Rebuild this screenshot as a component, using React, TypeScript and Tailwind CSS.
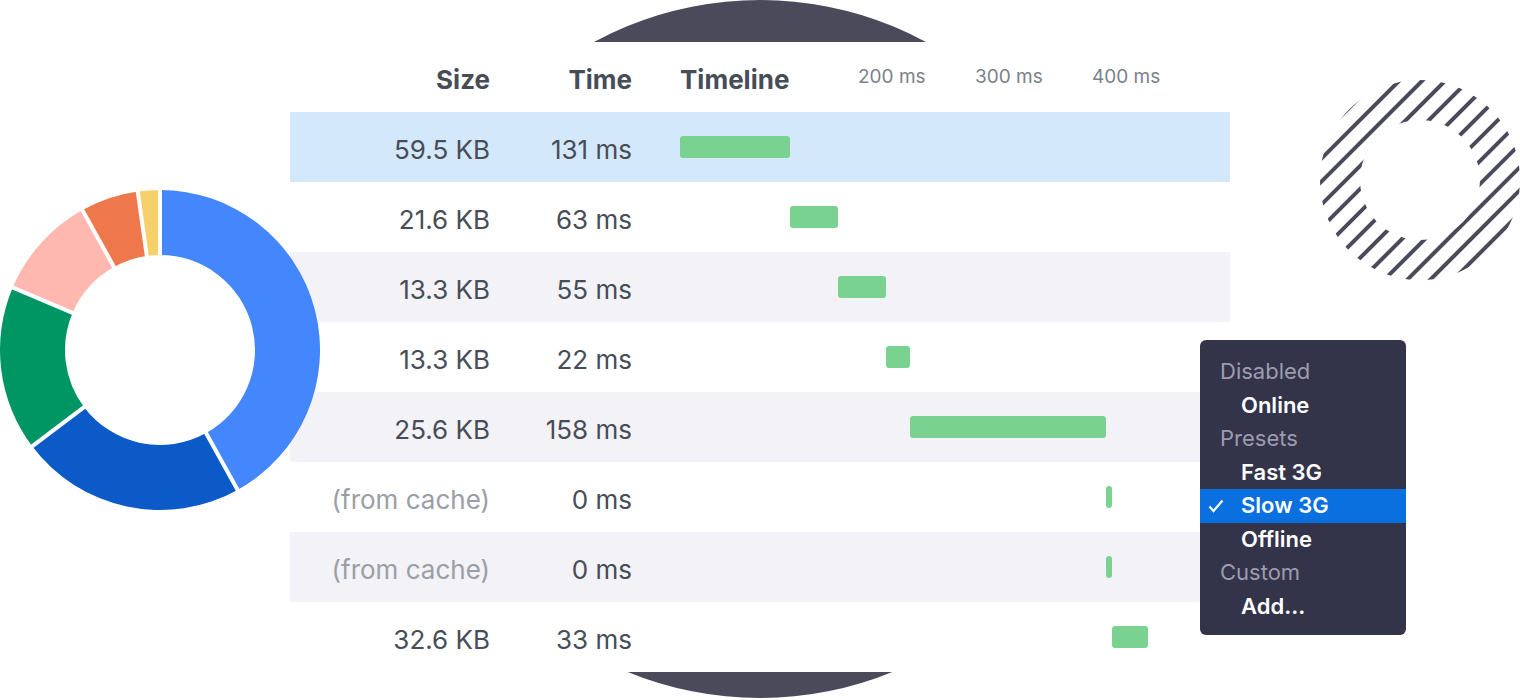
import React from 'react';

const font = { fontFamily: 'Inter, "Noto Sans", sans-serif' };

type Row = { size: string; time: string; left: number; width: number; cached?: boolean };

const rows: Row[] = [
  { size: '59.5 KB', time: '131 ms', left: 0, width: 110 },
  { size: '21.6 KB', time: '63 ms', left: 110, width: 48 },
  { size: '13.3 KB', time: '55 ms', left: 158, width: 48 },
  { size: '13.3 KB', time: '22 ms', left: 206, width: 24 },
  { size: '25.6 KB', time: '158 ms', left: 230, width: 196 },
  { size: '(from cache)', time: '0 ms', left: 426, width: 6, cached: true },
  { size: '(from cache)', time: '0 ms', left: 426, width: 6, cached: true },
  { size: '32.6 KB', time: '33 ms', left: 432, width: 36 },
];

const rowBg = (i: number) => {
  if (i === 0) return 'bg-[#d4e8fb]';
  return i % 2 === 0 ? 'bg-[#f2f2f7]' : 'bg-white';
};

// donut segments, degrees clockwise from 12 o'clock
const segments = [
  { from: 0, to: 151, color: '#4486fb' },
  { from: 151, to: 233, color: '#0b5ac8' },
  { from: 233, to: 293, color: '#009663' },
  { from: 293, to: 331, color: '#ffb8b0' },
  { from: 331, to: 352, color: '#ee784c' },
  { from: 352, to: 360, color: '#f6d06b' },
];

function pt(cx: number, cy: number, r: number, deg: number) {
  const a = ((deg - 90) * Math.PI) / 180;
  return [cx + r * Math.cos(a), cy + r * Math.sin(a)];
}

function Donut() {
  const c = 160;
  const R = 160;
  const r = 95;
  return (
    <svg width="320" height="320" viewBox="0 0 320 320">
      {segments.map((s) => {
        const [x1, y1] = pt(c, c, R, s.from);
        const [x2, y2] = pt(c, c, R, s.to);
        const [x3, y3] = pt(c, c, r, s.to);
        const [x4, y4] = pt(c, c, r, s.from);
        const large = s.to - s.from > 180 ? 1 : 0;
        const d = `M${x1} ${y1} A${R} ${R} 0 ${large} 1 ${x2} ${y2} L${x3} ${y3} A${r} ${r} 0 ${large} 0 ${x4} ${y4} Z`;
        return <path key={s.from} d={d} fill={s.color} />;
      })}
      {segments.map((s) => {
        const [x1, y1] = pt(c, c, r - 2, s.from);
        const [x2, y2] = pt(c, c, R + 1, s.from);
        return <line key={'g' + s.from} x1={x1} y1={y1} x2={x2} y2={y2} stroke="#fff" strokeWidth="4" />;
      })}
    </svg>
  );
}

function StripedRing() {
  const lines = [];
  for (let k = -14; k <= 4; k++) {
    const c = 310 + k * 23;
    lines.push(<line key={k} x1={c - 220} y1={220} x2={c + 20} y2={-20} stroke="#4b4a5a" strokeWidth="4" />);
  }
  return (
    <svg width="200" height="200" viewBox="0 0 200 200">
      <defs>
        <clipPath id="ring">
          <path
            clipRule="evenodd"
            d="M100 0 A100 100 0 1 1 99.99 0 Z M100 40 A60 60 0 1 0 100.01 40 Z"
          />
        </clipPath>
      </defs>
      <g clipPath="url(#ring)">{lines}</g>
    </svg>
  );
}

function ThrottleMenu() {
  const group = 'h-[33.5px] flex items-center pl-[20px] text-[22px] text-[#9c9cad]';
  const item = 'h-[33.5px] flex items-center pl-[41px] text-[22px] font-semibold text-white';
  return (
    <div className="absolute left-[1200px] top-[340px] z-20 w-[206px] rounded-md bg-[#33334a] pt-[15px] pb-[12px]" style={font}>
      <div className={group}>Disabled</div>
      <div className={item}>Online</div>
      <div className={group}>Presets</div>
      <div className={item}>Fast 3G</div>
      <div className="h-[33.5px] flex items-center pl-[8px] bg-[#0a6fdf] text-[22px] font-semibold text-white">
        <svg width="16" height="14" viewBox="0 0 16 14" className="mr-[17px]">
          <polyline points="1.5,7.5 5.5,12 14.5,1.5" fill="none" stroke="#fff" strokeWidth="2.2" />
        </svg>
        Slow 3G
      </div>
      <div className={item}>Offline</div>
      <div className={group}>Custom</div>
      <div className={item}>Add...</div>
    </div>
  );
}

export default function App() {
  return (
    <div className="relative w-[1520px] h-[700px] overflow-hidden bg-white" style={font}>
      {/* big backdrop circle */}
      <div className="absolute left-[411px] top-0 w-[698px] h-[698px] rounded-full bg-[#4b4a5a]" />

      <div className="absolute left-0 top-[190px] z-20">
        <Donut />
      </div>
      <div className="absolute left-[1320px] top-[80px]">
        <StripedRing />
      </div>

      <div className="pt-[42px] pl-[290px]">
        <div className="relative z-10 w-[940px] bg-white text-[#474d57]">
          <div className="h-[70px] flex items-center">
            <div className="w-[200px] pt-[4px] text-right text-[26px] font-bold">Size</div>
            <div className="w-[142px] pt-[4px] text-right text-[26px] font-bold">Time</div>
            <div className="ml-[48px] flex items-center">
              <div className="w-[178px] pt-[4px] text-[26px] font-bold">Timeline</div>
              <div className="w-[117px] text-[19px] text-[#7b818b]">200 ms</div>
              <div className="w-[117px] text-[19px] text-[#7b818b]">300 ms</div>
              <div className="w-[117px] text-[19px] text-[#7b818b]">400 ms</div>
            </div>
          </div>
          {rows.map((r, i) => (
            <div key={i} className={`h-[70px] flex items-center ${rowBg(i)}`}>
              <div className={`w-[200px] pt-[4px] text-right text-[26px] ${r.cached ? 'text-[#9a9ea6]' : ''}`}>{r.size}</div>
              <div className="w-[142px] pt-[4px] text-right text-[26px]">{r.time}</div>
              <div className="ml-[48px] flex-1">
                <div
                  className="h-[22px] rounded-[3px] bg-[#79d290]"
                  style={{ marginLeft: r.left, width: r.width }}
                />
              </div>
            </div>
          ))}
        </div>
      </div>

      <ThrottleMenu />
    </div>
  );
}
